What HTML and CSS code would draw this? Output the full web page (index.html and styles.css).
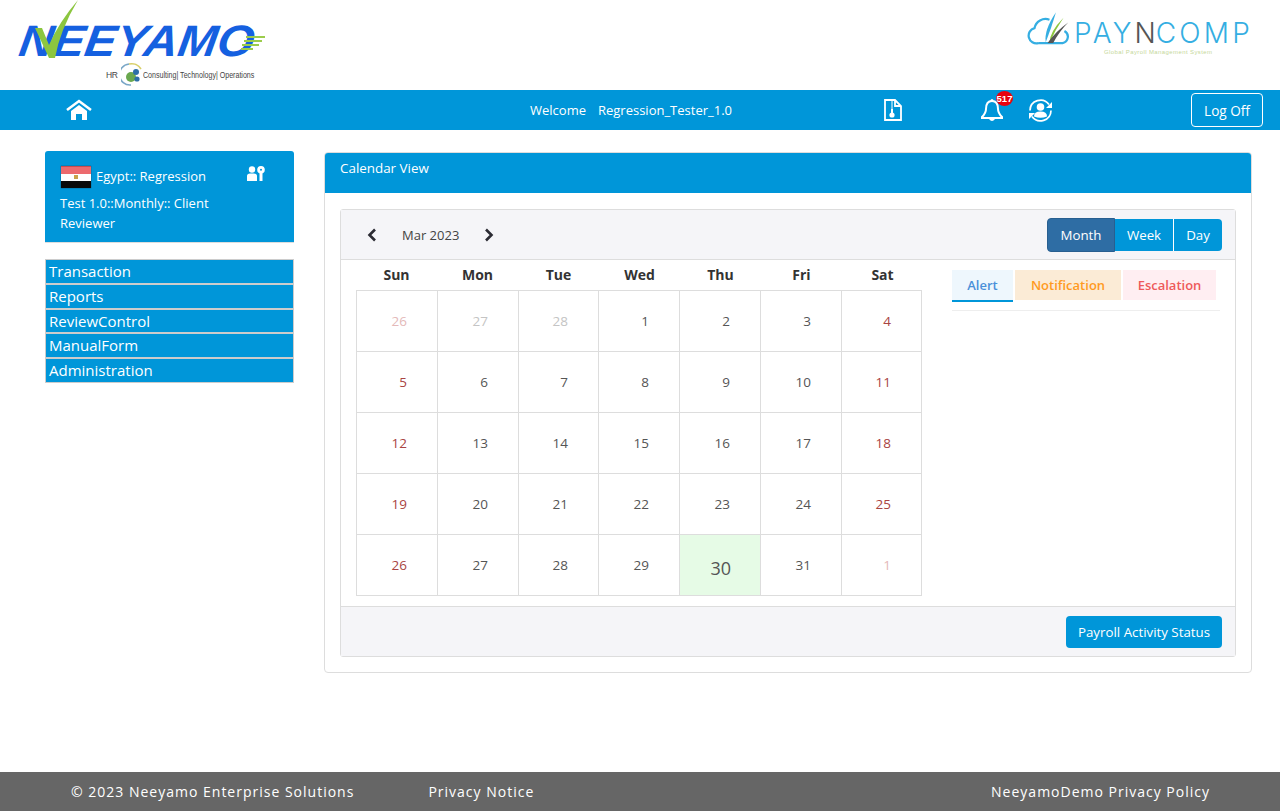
FILE: index.html
```html
<!DOCTYPE html>
<html lang="en">
<head>
<meta charset="utf-8">
<title>Calendar View</title>
<link rel="stylesheet" href="styles.css">
</head>
<body>
<div class="page">
<header class="brand">
  <div class="neeyamo">
    <div class="ney-word">NEEYAMO</div>
    <svg class="tick" width="70" height="62" viewBox="0 0 70 62"><path d="M5 28 L19 58 L25 58 Q30 30 48 0 Q29 22 19 45 L12 28 Z" fill="#8cc63f"/></svg>
    <svg class="ney-lines" width="24" height="14" viewBox="0 0 24 14"><path d="M5 1H24M3 5H21M1 9H18M0 13H12" stroke="#9ccc4c" stroke-width="2"/></svg>
    <div class="ney-sub"><span>HR</span>
      <svg width="22" height="24" viewBox="0 0 22 24"><path d="M8 2 A10.5 10.5 0 0 0 10 23" fill="none" stroke="#7aa7c7" stroke-width="1.6"/><path d="M8 2 A11 11 0 0 1 20 7" fill="none" stroke="#d8cf6a" stroke-width="1.6"/><circle cx="10" cy="15" r="5" fill="#6aa84f"/><circle cx="15" cy="10" r="3" fill="#2d6fa8"/><circle cx="16" cy="17" r="2.6" fill="#2d6fa8"/></svg>
      <span class="ney-tag">Consulting| Technology| Operations</span></div>
  </div>
  <div class="payn">
    <svg class="cloud" width="48" height="38" viewBox="0 0 48 38"><path d="M12 33 H38 A7 7 0 0 0 40 20 M12 33 A8 8 0 0 1 8 17 A12 12 0 0 1 24 8" fill="none" stroke="#35aee2" stroke-width="2.4"/><path d="M31 0 Q26 17 20 32 Q18 19 31 0Z" fill="#35aee2"/><path d="M39 6 Q30 19 24 33 Q24 21 39 6Z" fill="#8cc63f"/><path d="M44 11 Q34 21 28 33 L22 33 Q30 21 44 11Z" fill="#555"/></svg>
    <div class="payn-col">
      <div class="payn-word"><span>PAY</span><b>N</b><span>COMP</span></div>
      <div class="payn-sub">Global Payroll Management System</div>
    </div>
  </div>
</header>
<nav class="topbar">
  <svg class="home" width="26" height="22" viewBox="0 0 26 22"><path d="M1 11 L13 2 L25 11" fill="none" stroke="#fff" stroke-width="2.6"/><path d="M5 12 L13 6 L21 12 V21 H16 V15 H10 V21 H5Z" fill="#fff"/></svg>
  <div class="welcome"><span>Welcome</span><span>Regression_Tester_1.0</span></div>
  <svg class="zipdoc" width="18" height="22" viewBox="0 0 18 22"><path d="M1 1H11L17 7V21H1Z M11 1V7H17" fill="none" stroke="#fff" stroke-width="1.8"/><path d="M7 3H9M7 5H9M7 7H9M7 9H9" stroke="#fff" stroke-width="1.2"/><path d="M8 10V14" stroke="#fff" stroke-width="2"/><circle cx="8" cy="16" r="2.6" fill="#fff"/></svg>
  <div class="bell">
    <svg width="24" height="25" viewBox="0 0 24 25"><path d="M12 3 C7 3 6 7 6 11 C6 15 4 17 2 19 V20 H22 V19 C20 17 18 15 18 11 C18 7 17 3 12 3Z" fill="none" stroke="#fff" stroke-width="2"/><path d="M9 21 Q12 25 15 21Z" fill="#fff"/><circle cx="12" cy="2.5" r="1.5" fill="#fff"/></svg>
    <span class="badge">517</span>
  </div>
  <svg class="userswap" width="25" height="25" viewBox="0 0 25 25"><path d="M2 12.5 A10.5 10.5 0 0 1 21 6.5 M23 12.5 A10.5 10.5 0 0 1 4 18.5" fill="none" stroke="#fff" stroke-width="1.7"/><path d="M24 4V10H18Z M1 21V15H7Z" fill="#fff"/><circle cx="12.5" cy="9" r="3.8" fill="#fff"/><path d="M6 18.5 Q6 13.5 12.5 13.5 Q19 13.5 19 18.5 Q12.5 21 6 18.5Z" fill="#fff"/></svg>
  <button class="logoff">Log Off</button>
</nav>
<main class="content">
  <aside class="side">
    <div class="profile">
      <div class="profile-top">
        <div class="flag"><i class="red"></i><i class="white"></i><i class="black"></i><b class="eagle"></b></div>
        <span class="country">Egypt:: Regression</span>
        <svg class="keyuser" width="18" height="16" viewBox="0 0 18 16"><circle cx="5" cy="3.5" r="3.2" fill="#fff"/><path d="M0 15V10Q0 7.5 3 7.5H7Q10 7.5 10 10V15Z" fill="#fff"/><path d="M14 0A3.8 3.8 0 1 0 14 7.6A3.8 3.8 0 1 0 14 0Z M14 2.8A1 1 0 1 1 14 4.8A1 1 0 1 1 14 2.8Z" fill="#fff" fill-rule="evenodd"/><path d="M12.5 7H15.5V15H12.5Z" fill="#fff"/></svg>
      </div>
      <div class="profile-role">Test 1.0::Monthly:: Client Reviewer</div>
    </div>
    <ul class="menu">
      <li>Transaction</li><li>Reports</li><li>ReviewControl</li><li>ManualForm</li><li>Administration</li>
    </ul>
  </aside>
  <section class="panel">
    <div class="panel-head">Calendar View</div>
    <div class="panel-body">
      <div class="cal">
        <div class="cal-head">
          <div class="month-nav">
            <svg width="10" height="14" viewBox="0 0 10 14"><path d="M8 1.5 L2.5 7 L8 12.5" fill="none" stroke="#2b2b33" stroke-width="2.6"/></svg>
            <span>Mar 2023</span>
            <svg width="10" height="14" viewBox="0 0 10 14"><path d="M2 1.5 L7.5 7 L2 12.5" fill="none" stroke="#2b2b33" stroke-width="2.6"/></svg>
          </div>
          <div class="btns"><button class="on">Month</button><button class="wk">Week</button><button class="dy">Day</button></div>
        </div>
        <div class="cal-main">
          <div class="grid-wrap">
            <div class="dow"><span>Sun</span><span>Mon</span><span>Tue</span><span>Wed</span><span>Thu</span><span>Fri</span><span>Sat</span></div>
            <div class="grid">
              <div class="d we off">26</div><div class="d off">27</div><div class="d off">28</div><div class="d">1</div><div class="d">2</div><div class="d">3</div><div class="d we">4</div>
              <div class="d we">5</div><div class="d">6</div><div class="d">7</div><div class="d">8</div><div class="d">9</div><div class="d">10</div><div class="d we">11</div>
              <div class="d we">12</div><div class="d">13</div><div class="d">14</div><div class="d">15</div><div class="d">16</div><div class="d">17</div><div class="d we">18</div>
              <div class="d we">19</div><div class="d">20</div><div class="d">21</div><div class="d">22</div><div class="d">23</div><div class="d">24</div><div class="d we">25</div>
              <div class="d we">26</div><div class="d">27</div><div class="d">28</div><div class="d">29</div><div class="d today">30</div><div class="d">31</div><div class="d we off">1</div>
            </div>
          </div>
          <div class="tabs">
            <div class="tab alert">Alert</div><div class="tab notif">Notification</div><div class="tab esc">Escalation</div>
          </div>
        </div>
        <div class="cal-foot"><button class="status">Payroll Activity Status</button></div>
      </div>
    </div>
  </section>
</main>
<footer class="foot">
  <span class="copy">© 2023 Neeyamo Enterprise Solutions</span>
  <span class="priv">Privacy Notice</span>
  <span class="demo">NeeyamoDemo Privacy Policy</span>
</footer>
</div>
</body>
</html>
```
FILE: styles.css
```css
* { box-sizing: border-box; }
html, body { margin: 0; height: 100%; }
body { font-family: "Open Sans", "Noto Sans", sans-serif; background: #fff; color: #333; font-size: 13px; }
.page { height: 811px; display: flex; flex-direction: column; overflow: hidden; }

.brand { height: 90px; flex: none; display: flex; justify-content: space-between; }
.neeyamo { position: relative; width: 270px; height: 90px; margin-left: 16px; }
.tick { position: absolute; left: 14px; top: 0; }
.ney-word { position: absolute; left: 0; top: 16px; font: italic 700 44px/50px "Liberation Sans", sans-serif; color: #1560e0; transform: scaleX(1.07) skewX(-8deg); transform-origin: left bottom; white-space: nowrap; }
.ney-lines { position: absolute; left: 225px; top: 36px; }
.ney-sub { position: absolute; left: 90px; top: 63px; display: flex; align-items: center; gap: 3px; font: 9.5px/24px "Liberation Sans", sans-serif; color: #444; white-space: nowrap; }
.ney-sub svg { margin-top: -2px; }
.ney-sub span:first-child { font-size: 8.5px; letter-spacing: -.3px; }
.ney-tag { margin-left: -3px; transform: scaleX(.745); transform-origin: left center; }
.payn { display: flex; width: 226px; margin: 11px 27px 0 0; height: 44px; position: relative; }
.payn-col { margin-left: 2px; }
.payn-word { font: 300 28px/26px "Inter", sans-serif; color: #35aee2; letter-spacing: 3.2px; margin-top: 9px; white-space: nowrap; }
.payn-word b { color: #555; font-weight: 300; letter-spacing: 0; }
.payn-sub { font: 6px/8px "Liberation Sans", sans-serif; color: #c6d89a; letter-spacing: .4px; margin-left: 30px; margin-top: 2px; white-space: nowrap; }

.topbar { height: 40px; flex: none; background: #0096d9; color: #fff; display: flex; align-items: center; position: relative; padding: 0 17px 0 66px; }
.home { flex: none; }
.welcome { margin-left: 438px; width: 350px; display: flex; gap: 12px; font-size: 13px; }
.zipdoc { flex: none; margin-left: 4px; }
.bell { position: relative; margin-left: 78px; width: 24px; height: 25px; }
.badge { position: absolute; left: 16px; top: -7px; width: 17px; height: 15px; border-radius: 50%; background: #e8000d; color: #fff; font: 700 9.5px/15px "Liberation Sans", sans-serif; text-align: center; }
.userswap { flex: none; margin-left: 24px; }
.logoff { margin-left: auto; width: 72px; height: 34px; border: 1px solid #fff; border-radius: 4px; background: transparent; color: #fff; font: 13.6px "Open Sans", sans-serif; }

.content { flex: 1; display: flex; align-items: flex-start; padding: 21px 28px 0 45px; gap: 30px; }
.side { width: 249px; flex: none; }
.profile { height: 92px; background: #0096d9; color: #fff; border-radius: 3px 3px 0 0; border-bottom: 1px solid #ddd; padding: 15px 15px 0; font-size: 13px; }
.profile-top { display: flex; align-items: center; height: 22px; gap: 5px; position: relative; }
.flag { width: 30px; height: 22px; margin-left: 1px; display: flex; flex-direction: column; position: relative; box-shadow: 0 0 1px #134; }
.flag i { flex: 1; display: block; }
.flag .red { background: #ec6a6e; border-top: 1px solid #c94b50; }
.flag .white { background: #fff; }
.flag .black { background: #0a0a0a; }
.eagle { position: absolute; left: 13px; top: 9px; width: 4px; height: 4px; background: #c9a24a; }
.country { margin-top: -3px; }
.keyuser { position: absolute; left: 187px; top: 0; }
.profile-role { margin-top: 5px; line-height: 20px; width: 175px; }
.menu { list-style: none; margin: 16px 0 0; padding: 0; border: 1px solid #ccc; background: #ccc; display: flex; flex-direction: column; gap: 2px; }
.menu li { height: 22.75px; background: #0096d9; color: #fff; font-size: 15px; line-height: 23px; padding-left: 3px; }

.panel { width: 928px; height: 521px; margin-top: 1px; border: 1px solid #ddd; border-radius: 4px; }
.panel-head { height: 40px; background: #0096d9; color: #fff; font-size: 13.4px; padding: 6px 15px; border-radius: 3px 3px 0 0; }
.panel-body { padding: 16px 15px 15px; }
.cal { height: 448px; border: 1px solid #ddd; border-radius: 3px; display: flex; flex-direction: column; }
.cal-head { height: 50px; flex: none; background: #f5f5f8; border-bottom: 1px solid #ddd; display: flex; align-items: center; justify-content: space-between; padding: 0 13px 0 26px; }
.month-nav { display: flex; align-items: center; gap: 25px; color: #444; font-size: 13px; }
.btns { display: flex; margin-top: 1px; }
.btns button { height: 32px; border: 0; border-left: 1px solid #fff; background: #0096d9; color: #fff; font: 13.3px "Open Sans", sans-serif; padding: 0; }
.btns .on { width: 68px; height: 34px; margin-top: -1px; background: #2e6da4; border: 1px solid #285f90; border-radius: 4px 0 0 4px; }
.btns .wk { width: 58px; border-left: 0; }
.btns .dy { width: 49px; border-radius: 0 4px 4px 0; }
.cal-main { flex: 1; display: flex; padding: 0 15px 0 15px; }
.grid-wrap { width: 566px; flex: none; }
.dow { display: grid; grid-template-columns: repeat(7, 81px); height: 30px; padding-bottom: 2px; align-items: center; text-align: center; font-weight: 700; font-size: 14px; color: #333; }
.grid { display: grid; grid-template-columns: 81px 81px 80px 81px 81px 81px 80px; grid-auto-rows: 61px; border-top: 1px solid #ddd; border-left: 1px solid #ddd; }
.d { border-right: 1px solid #ddd; border-bottom: 1px solid #ddd; display: flex; align-items: center; justify-content: flex-end; padding-right: 30px; font-size: 13.5px; color: #555; }
.d.we { color: #a94442; }
.d.off { color: #c4c4c4; }
.d.we.off { color: #e4b9b9; }
.d.today { background: #e6fbe6; font-size: 18px; padding-right: 29px; padding-top: 5px; }
.tabs { margin: 10px 0 0 30px; width: 268px; height: 41px; border-bottom: 1px solid #eee; display: flex; gap: 2px; align-items: flex-start; font-weight: 600; font-size: 13px; }
.tab { height: 30px; line-height: 30px; text-align: center; }
.alert { width: 61px; background: #eef7fd; color: #4a90d9; height: 32px; border-bottom: 2px solid #0096d9; }
.notif { width: 106px; background: #fbebd6; color: #ff9a1f; }
.esc { width: 93px; background: #ffeef2; color: #ee5a5a; }
.cal-foot { height: 50px; flex: none; background: #f5f5f8; border-top: 1px solid #ddd; display: flex; align-items: center; justify-content: flex-end; padding: 0 13px; }
.status { height: 32px; width: 156px; border: 0; border-radius: 4px; background: #0096d9; color: #fff; font: 13.3px "Open Sans", sans-serif; }

.foot { height: 39px; flex: none; background: #666; color: #fff; display: flex; align-items: center; font-size: 14px; letter-spacing: 1px; padding: 0 70px 0 71px; font-weight: 500; }
.priv { margin-left: 74px; }
.demo { margin-left: auto; }
```
